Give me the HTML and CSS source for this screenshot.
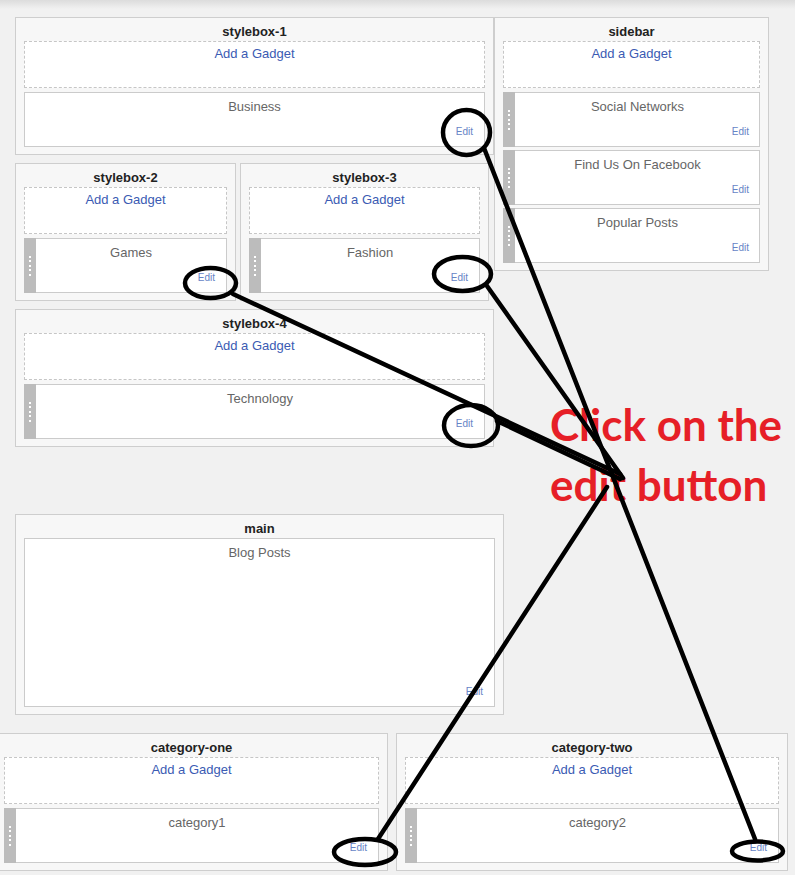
FILE: index.html
```html
<!DOCTYPE html>
<html>
<head>
<meta charset="utf-8">
<title>Layout</title>
<link rel="stylesheet" href="styles.css">
</head>
<body>
<div class="page">
  <div class="top">
    <div class="col-left">
      <section class="box w479">
        <div class="box-title">stylebox-1</div>
        <div class="add">Add a Gadget</div>
        <div class="widgets">
          <div class="widget"><div class="wbody"><div class="wtitle">Business</div><div class="edit">Edit</div></div></div>
        </div>
      </section>
      <div class="pair">
        <section class="box w221">
          <div class="box-title">stylebox-2</div>
          <div class="add">Add a Gadget</div>
          <div class="widgets">
            <div class="widget grab"><div class="handle"><i></i><i></i><i></i><i></i><i></i></div><div class="wbody"><div class="wtitle">Games</div><div class="edit">Edit</div></div></div>
          </div>
        </section>
        <section class="box w249">
          <div class="box-title">stylebox-3</div>
          <div class="add">Add a Gadget</div>
          <div class="widgets">
            <div class="widget grab"><div class="handle"><i></i><i></i><i></i><i></i><i></i></div><div class="wbody"><div class="wtitle">Fashion</div><div class="edit">Edit</div></div></div>
          </div>
        </section>
      </div>
      <section class="box w479">
        <div class="box-title">stylebox-4</div>
        <div class="add">Add a Gadget</div>
        <div class="widgets">
          <div class="widget grab"><div class="handle"><i></i><i></i><i></i><i></i><i></i></div><div class="wbody"><div class="wtitle">Technology</div><div class="edit">Edit</div></div></div>
        </div>
      </section>
    </div>
    <section class="box sidebar">
      <div class="box-title">sidebar</div>
      <div class="add">Add a Gadget</div>
      <div class="widgets">
        <div class="widget grab"><div class="handle"><i></i><i></i><i></i><i></i><i></i></div><div class="wbody side"><div class="wtitle">Social Networks</div><div class="edit">Edit</div></div></div>
        <div class="widget grab"><div class="handle"><i></i><i></i><i></i><i></i><i></i></div><div class="wbody side"><div class="wtitle">Find Us On Facebook</div><div class="edit">Edit</div></div></div>
        <div class="widget grab"><div class="handle"><i></i><i></i><i></i><i></i><i></i></div><div class="wbody side"><div class="wtitle">Popular Posts</div><div class="edit">Edit</div></div></div>
      </div>
    </section>
  </div>

  <section class="box main">
    <div class="box-title">main</div>
    <div class="widgets">
      <div class="widget tall"><div class="wbody"><div class="wtitle">Blog Posts</div><div class="edit">Edit</div></div></div>
    </div>
  </section>

  <div class="cats">
    <section class="box w393">
      <div class="box-title">category-one</div>
      <div class="add">Add a Gadget</div>
      <div class="widgets">
        <div class="widget grab"><div class="handle"><i></i><i></i><i></i><i></i><i></i></div><div class="wbody"><div class="wtitle">category1</div><div class="edit">Edit</div></div></div>
      </div>
    </section>
    <section class="box w392">
      <div class="box-title">category-two</div>
      <div class="add">Add a Gadget</div>
      <div class="widgets">
        <div class="widget grab"><div class="handle"><i></i><i></i><i></i><i></i><i></i></div><div class="wbody"><div class="wtitle">category2</div><div class="edit">Edit</div></div></div>
      </div>
    </section>
  </div>

  <div class="callout">Click on the<br>edit button</div>

  <svg class="marks" width="795" height="875" viewBox="0 0 795 875" xmlns="http://www.w3.org/2000/svg">
    <g fill="none" stroke="#000" stroke-width="4.5" stroke-linecap="round">
      <ellipse cx="466.5" cy="132.5" rx="23.5" ry="22.5"/>
      <ellipse cx="210.5" cy="283" rx="25.5" ry="15"/>
      <ellipse cx="462.5" cy="274" rx="28.5" ry="17"/>
      <ellipse cx="471" cy="425.5" rx="27" ry="20.5"/>
      <ellipse cx="365" cy="852" rx="31" ry="13"/>
      <ellipse cx="757.5" cy="851" rx="25.5" ry="9.5"/>
      <line x1="484" y1="148" x2="755" y2="839"/>
      <line x1="487" y1="286" x2="623" y2="478"/>
      <line x1="233" y1="294" x2="620" y2="474"/>
      <line x1="497" y1="421" x2="620" y2="479"/>
      <line x1="378" y1="839" x2="607" y2="487"/>
    </g>
  </svg>
</div>
</body>
</html>
```

FILE: styles.css
```css
* { box-sizing: border-box; }

html, body {
  margin: 0;
  width: 795px;
  height: 875px;
  overflow: hidden;
}

body {
  background: #f1f1f1 linear-gradient(#dcdcdc, #f1f1f1 9px) no-repeat;
  font-family: Arial, "Liberation Sans", sans-serif;
}

.page {
  position: relative;
  height: 875px;
  padding: 17px 0 0 15px;
}

.top { display: flex; }

.col-left {
  width: 479px;
  display: flex;
  flex-direction: column;
  gap: 8px;
}

.pair { display: flex; gap: 4px; }

.box {
  border: 1px solid #cecece;
  background: #f7f7f7;
  padding: 0 8px 7px;
  display: flex;
  flex-direction: column;
}

.w479 { width: 479px; }
.w221 { width: 221px; }
.w249 { width: 249px; }
.w393 { width: 393px; }
.w392 { width: 392px; }
.sidebar { width: 275px; align-self: flex-start; }
.main { width: 489px; margin-top: 67px; }

.cats {
  display: flex;
  gap: 8px;
  margin: 18px 0 0 -20px;
}

.box-title {
  height: 23px;
  padding-top: 4px;
  line-height: 19px;
  font-size: 13px;
  font-weight: bold;
  color: #222;
  text-align: center;
}

.add {
  height: 47px;
  margin-bottom: 4px;
  padding-top: 4px;
  border: 1px dashed #c6c6c6;
  background: #fff;
  text-align: center;
  font-size: 13px;
  line-height: 16px;
  color: #3b5bb3;
}

.widgets {
  display: flex;
  flex-direction: column;
  gap: 3px;
}

.widget {
  display: flex;
  height: 55px;
  border: 1px solid #cbcbcb;
  background: #fff;
}

.widget.tall { height: 169px; }

.widget.grab { border-left: 0; }

.handle {
  width: 12px;
  margin: -1px 0;
  background: #bcbcbc;
  display: flex;
  flex-direction: column;
  justify-content: center;
  align-items: center;
  gap: 2.5px;
}

.handle i {
  display: block;
  width: 2px;
  height: 2px;
  background: #fff;
}

.wbody {
  flex: 1;
  display: flex;
  flex-direction: column;
  padding: 6px 11px 8px;
  text-align: center;
}

.wbody.side { padding-right: 10px; }

.wtitle {
  font-size: 13px;
  line-height: 16px;
  color: #666;
}

.edit {
  margin-top: auto;
  text-align: right;
  font-size: 10px;
  line-height: 12px;
  color: #6684c6;
}

.callout {
  position: absolute;
  left: 550px;
  top: 394px;
  font-family: Lato, "Open Sans", sans-serif;
  font-weight: 700;
  font-size: 44px;
  line-height: 60px;
  color: #e61f27;
  white-space: nowrap;
}

.marks {
  position: absolute;
  left: 0;
  top: 0;
  pointer-events: none;
}
```
